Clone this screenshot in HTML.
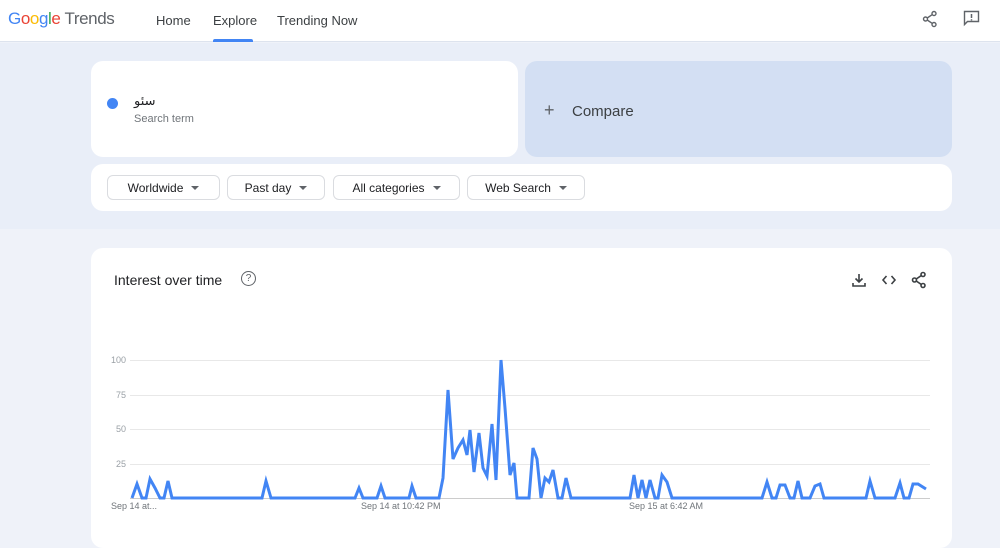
<!DOCTYPE html>
<html><head><meta charset="utf-8"><style>
*{margin:0;padding:0;box-sizing:border-box}
body{width:1000px;height:514px;overflow:hidden;font-family:"Liberation Sans","Noto Sans CJK SC",sans-serif;background:#eff2f9;position:relative;color:#202124}
.hdr{position:absolute;left:0;top:0;width:1000px;height:42px;background:#fff;border-bottom:1px solid #dde3ee}
.top{position:absolute;left:0;top:43px;width:1000px;height:186px;background:#e9eef8}
.abs{position:absolute}
.nav{position:absolute;top:13px;font-size:13px;color:#3c4043}
.card{position:absolute;background:#fff;border-radius:12px}
.chip{position:absolute;top:175px;height:25px;border:1px solid #dadce0;border-radius:6px;background:#fff;font-size:12px;color:#202124;display:flex;align-items:center;justify-content:center;gap:8px}
.tri{width:0;height:0;border-left:4px solid transparent;border-right:4px solid transparent;border-top:4px solid #5f6368}
.yl{position:absolute;left:100px;width:26px;text-align:right;font-size:9px;color:#9aa0a6}
.gl{position:absolute;left:130px;width:800px;height:1px;background:#e8e8e8}
.xl{position:absolute;top:501px;font-size:9px;color:#70757a}
</style></head><body>
<div class="hdr">
 <div class="abs" style="left:8px;top:9px;font-size:17px;letter-spacing:-0.4px"><span style="color:#4285f4">G</span><span style="color:#ea4335">o</span><span style="color:#fbbc05">o</span><span style="color:#4285f4">g</span><span style="color:#34a853">l</span><span style="color:#ea4335">e</span> <span style="color:#5f6368">Trends</span></div>
 <div class="nav" style="left:156px">Home</div>
 <div class="nav" style="left:213px">Explore</div>
 <div class="abs" style="left:213px;top:39px;width:40px;height:3px;background:#4285f4;border-radius:2px 2px 0 0"></div>
 <div class="nav" style="left:277px">Trending Now</div>
 <svg class="abs" style="left:922px;top:10px" width="16" height="18" viewBox="0 0 16 18"><g fill="none" stroke="#5f6368" stroke-width="1.4"><circle cx="12" cy="3.5" r="2"/><circle cx="3.5" cy="9" r="2"/><circle cx="12" cy="14.5" r="2"/><path d="M5.2 8 10.3 4.6M5.2 10 10.3 13.4"/></g></svg>
 <svg class="abs" style="left:963px;top:10px" width="17" height="17" viewBox="0 0 17 17"><path d="M1.5 1.5h14v10h-11l-3 3z" fill="none" stroke="#5f6368" stroke-width="1.4"/><path d="M8.5 4v4M8.5 9.2v1.3" stroke="#5f6368" stroke-width="1.5"/></svg>
</div>
<div class="top"></div>
<div class="card" style="left:91px;top:61px;width:427px;height:96px">
 <div class="abs" style="left:16px;top:37px;width:11px;height:11px;border-radius:50%;background:#4285f4"></div>
 <div class="abs" style="left:43px;top:33px;font-size:13px;font-family:'DejaVu Sans',sans-serif">سئو</div>
 <div class="abs" style="left:43px;top:52px;font-size:11px;color:#70757a">Search term</div>
</div>
<div class="card" style="left:525px;top:61px;width:427px;height:96px;background:#d3dff3">
 <div class="abs" style="left:19px;top:40px;font-size:18px;color:#5f6368;line-height:18px">+</div>
 <div class="abs" style="left:47px;top:42px;font-size:15px;color:#3c4043">Compare</div>
</div>
<div class="card" style="left:91px;top:164px;width:861px;height:47px"></div>
<div class="chip" style="left:107px;width:113px">Worldwide <span class="tri"></span></div>
<div class="chip" style="left:227px;width:98px">Past day <span class="tri"></span></div>
<div class="chip" style="left:333px;width:127px">All categories <span class="tri"></span></div>
<div class="chip" style="left:467px;width:118px">Web Search <span class="tri"></span></div>
<div class="card" style="left:91px;top:248px;width:861px;height:300px"></div>
<div class="abs" style="left:114px;top:272px;font-size:14px">Interest over time</div>
<div class="abs" style="left:241px;top:271px;width:15px;height:15px;border:1.4px solid #5f6368;border-radius:50%;font-size:10px;text-align:center;line-height:13px;color:#5f6368">?</div>
<svg class="abs" style="left:851px;top:272px" width="16" height="16" viewBox="0 0 16 16"><path d="M8 2v8M4.5 6.5 8 10l3.5-3.5M2 11v3h12v-3" fill="none" stroke="#3c4043" stroke-width="1.6"/></svg>
<svg class="abs" style="left:881px;top:272px" width="16" height="16" viewBox="0 0 16 16"><path d="M5.5 4 2 8l3.5 4M10.5 4 14 8l-3.5 4" fill="none" stroke="#3c4043" stroke-width="1.6"/></svg>
<svg class="abs" style="left:911px;top:271px" width="16" height="18" viewBox="0 0 16 18"><g fill="none" stroke="#3c4043" stroke-width="1.6"><circle cx="12" cy="3.5" r="2"/><circle cx="3.5" cy="9" r="2"/><circle cx="12" cy="14.5" r="2"/><path d="M5.2 8 10.3 4.6M5.2 10 10.3 13.4"/></g></svg>
<div class="gl" style="top:360px"></div><div class="gl" style="top:395px"></div><div class="gl" style="top:429px"></div><div class="gl" style="top:464px"></div><div class="gl" style="top:498px;background:#ccc"></div>
<div class="yl" style="top:355px">100</div><div class="yl" style="top:390px">75</div><div class="yl" style="top:424px">50</div><div class="yl" style="top:459px">25</div>
<div class="xl" style="left:111px">Sep 14 at...</div>
<div class="xl" style="left:361px">Sep 14 at 10:42 PM</div>
<div class="xl" style="left:629px">Sep 15 at 6:42 AM</div>
<svg class="abs" style="left:0;top:0" width="1000" height="514"><polyline fill="none" stroke="#4285f4" stroke-width="3" stroke-linejoin="miter" points="132,498 137,484 142,498 146,498 150,479 155,488 160,498 164,498 168,481 172,498 262,498 266,481 271,498 355,498 359,488 363,498 377,498 381,486 385,498 409,498 412,486 416,498 439,498 443,478 448,390 453,459 458,448 463,440 467,455 470,430 474,472 479,433 483,468 487,476 492,424 496,480 501,360 505,408 510,475 514,463 517,498 529,498 533,448 537,459 541,498 545,478 549,482 553,470 558,498 562,498 566,478 571,498 630,498 634,475 638,498 642,480 646,498 650,480 655,498 658,498 662,475 667,482 672,498 762,498 767,482 772,498 776,498 780,485 785,485 790,498 794,498 798,481 802,498 810,498 815,486 820,484 824,498 866,498 870,481 875,498 895,498 900,483 904,498 909,498 913,484 918,484 926,489"/></svg>
</body></html>
